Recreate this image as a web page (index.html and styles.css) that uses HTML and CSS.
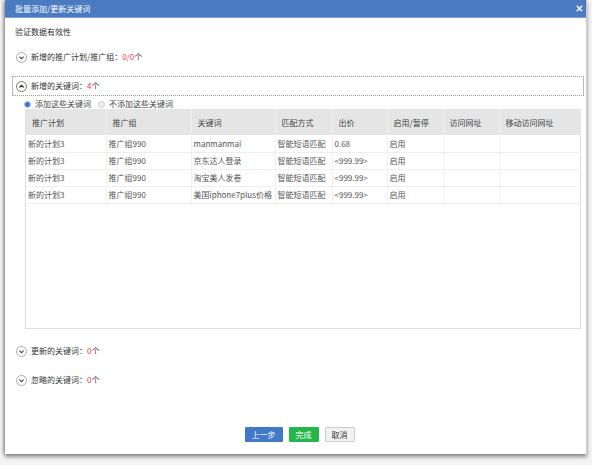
FILE: index.html
```html
<!DOCTYPE html>
<html lang="zh-CN">
    <head>
        <meta charset="UTF-8" />
        <title>批量添加/更新关键词</title>
        <link rel="stylesheet" href="styles.css">
    </head>
    <body>
        <div class="dlg">
            <div class="dlg-head">
                <span class="dlg-title">批量添加/更新关键词</span>
                <span class="dlg-close">
                    <svg width="7" height="7" viewBox="0 0 7 7"><path d="M0.8 0.8 L6.2 6.2 M6.2 0.8 L0.8 6.2" stroke="#fff" stroke-width="1.4" fill="none"/></svg>
                </span>
            </div>

            <div class="dlg-body">
                <div class="check-title">验证数据有效性</div>

                <div class="group-row first">
                    <svg class="fold" width="11" height="11" viewBox="0 0 11 11"><circle cx="5.5" cy="5.5" r="5" fill="#fff" stroke="#aaa"/><path d="M3.4 4.6 L5.5 6.7 L7.6 4.6" stroke="#444" stroke-width="1.1" fill="none"/></svg>
                    <span>新增的推广计划/推广组：<em>0/0</em>个</span>
                </div>

                <div class="group-row open">
                    <svg class="fold" width="11" height="11" viewBox="0 0 11 11"><circle cx="5.5" cy="5.5" r="5" fill="#fff" stroke="#777"/><path d="M3.4 6.5 L5.5 4.4 L7.6 6.5" stroke="#333" stroke-width="1.2" fill="none"/></svg>
                    <span>新增的关键词：<em>4</em>个</span>
                </div>

                <div class="radios">
                    <label class="radio"><i class="dot on"></i>添加这些关键词</label>
                    <label class="radio"><i class="dot"></i>不添加这些关键词</label>
                </div>

                <div class="grid-wrap">
                    <table class="grid">
                        <colgroup>
                            <col style="width:80px"><col style="width:85px"><col style="width:84px"><col style="width:57px">
                            <col style="width:55px"><col style="width:56px"><col style="width:56px"><col style="width:82px">
                        </colgroup>
                        <thead>
                            <tr>
                                <th>推广计划</th><th>推广组</th><th>关键词</th><th>匹配方式</th>
                                <th>出价</th><th>启用/暂停</th><th>访问网址</th><th>移动访问网址</th>
                            </tr>
                        </thead>
                        <tbody>
                            <tr>
                                <td>新的计划3</td><td>推广组990</td><td>manmanmai</td><td>智能短语匹配</td>
                                <td>0.68</td><td>启用</td><td></td><td></td>
                            </tr>
                            <tr>
                                <td>新的计划3</td><td>推广组990</td><td>京东达人登录</td><td>智能短语匹配</td>
                                <td>&lt;999.99&gt;</td><td>启用</td><td></td><td></td>
                            </tr>
                            <tr>
                                <td>新的计划3</td><td>推广组990</td><td>淘宝美人发卷</td><td>智能短语匹配</td>
                                <td>&lt;999.99&gt;</td><td>启用</td><td></td><td></td>
                            </tr>
                            <tr>
                                <td>新的计划3</td><td>推广组990</td><td>美国iphone7plus价格</td><td>智能短语匹配</td>
                                <td>&lt;999.99&gt;</td><td>启用</td><td></td><td></td>
                            </tr>
                        </tbody>
                    </table>
                </div>

                <div class="group-row update">
                    <svg class="fold" width="11" height="11" viewBox="0 0 11 11"><circle cx="5.5" cy="5.5" r="5" fill="#fff" stroke="#aaa"/><path d="M3.4 4.6 L5.5 6.7 L7.6 4.6" stroke="#444" stroke-width="1.1" fill="none"/></svg>
                    <span>更新的关键词：<em>0</em>个</span>
                </div>

                <div class="group-row ignore">
                    <svg class="fold" width="11" height="11" viewBox="0 0 11 11"><circle cx="5.5" cy="5.5" r="5" fill="#fff" stroke="#aaa"/><path d="M3.4 4.6 L5.5 6.7 L7.6 4.6" stroke="#444" stroke-width="1.1" fill="none"/></svg>
                    <span>忽略的关键词：<em>0</em>个</span>
                </div>
            </div>

            <div class="dlg-foot">
                <button class="btn btn-blue">上一步</button>
                <button class="btn btn-green">完成</button>
                <button class="btn btn-gray">取消</button>
            </div>
        </div>
    </body>
</html>
```

FILE: styles.css
```css
* {
    box-sizing: border-box;
}

html,
body {
    margin: 0;
    padding: 0;
}

body {
    width: 592px;
    height: 465px;
    background: #f4f4f4;
    font-family: "Noto Sans CJK SC", "Noto Sans", sans-serif;
    font-size: 8px;
    color: #333;
    overflow: hidden;
}

/* dialog frame */
.dlg {
    display: flex;
    flex-direction: column;
    width: 582px;
    height: 454px;
    margin-left: 5px;
    background: #fff;
    border-right: 1px solid #ccc;
    box-shadow: 0 3px 4px rgba(0, 0, 0, 0.4), -2px 0 3px rgba(0, 0, 0, 0.25);
}

.dlg-head {
    display: flex;
    align-items: center;
    justify-content: space-between;
    height: 18px;
    padding: 0 3px 0 10px;
    background: #4a7bc2;
    border-bottom: 1px solid #7ea0d4;
    color: #fff;
}

.dlg-title {
    line-height: 18px;
}

.dlg-close {
    display: flex;
}

.dlg-body {
    flex: 1;
    padding: 0 2px 0 7px;
}

.check-title {
    margin-top: 8px;
    padding-left: 3px;
    line-height: 12px;
}

/* collapsible group rows */
.group-row {
    display: flex;
    align-items: center;
    gap: 4px;
    height: 12px;
    padding-left: 4px;
    line-height: 12px;
}

.group-row em {
    font-style: normal;
    color: #e3393c;
}

.group-row.first {
    margin-top: 13px;
}

.group-row.open {
    height: 20px;
    margin-top: 13px;
    padding-left: 3px;
    border: 1px dotted #999;
    border-left: 1px solid #bbb;
    border-right: 1px solid #bbb;
}

.group-row.update {
    margin-top: 16px;
}

.group-row.ignore {
    margin-top: 17px;
}

.fold {
    flex: none;
}

/* radio choices */
.radios {
    display: flex;
    gap: 7px;
    height: 10px;
    margin: 3px 0 0 12px;
    line-height: 10px;
}

.radio {
    display: flex;
    align-items: center;
    gap: 4px;
    color: #444;
}

.dot {
    width: 7px;
    height: 7px;
    border-radius: 50%;
    border: 1px solid #ccc;
    background: #eee;
}

.dot.on {
    background: #3a76cf;
    border-color: #b9cde9;
}

/* keyword table */
.grid-wrap {
    height: 220px;
    margin: 0 3px 0 13px;
    border: 1px solid #ddd;
    border-top: none;
}

.grid {
    width: 100%;
    table-layout: fixed;
    border-collapse: collapse;
}

.grid th {
    height: 26px;
    padding: 0 0 0 6px;
    background: #e5e5e5;
    border-left: 1px solid #f0f0f0;
    font-weight: normal;
    text-align: left;
    color: #444;
    white-space: nowrap;
}

.grid th:first-child {
    border-left: none;
}

.grid td {
    height: 17px;
    padding: 0 0 0 2px;
    border-left: 1px solid #f0f0f0;
    border-bottom: 1px solid #eee;
    color: #555;
    white-space: nowrap;
    overflow: hidden;
}

.grid td:first-child {
    border-left: none;
}

/* footer buttons */
.dlg-foot {
    display: flex;
    justify-content: center;
    gap: 6px;
    padding: 0 0 12px 8px;
}

.btn {
    height: 15px;
    padding: 0 7px;
    border: none;
    border-radius: 1px;
    font-family: inherit;
    font-size: 8px;
    line-height: 15px;
    color: #fff;
}

.btn-blue {
    background: #4079c8;
}

.btn-green {
    background: #25b64b;
}

.btn-gray {
    padding: 0 6px;
    background: #f2f2f2;
    border: 1px solid #ccc;
    line-height: 13px;
    color: #333;
}
```
